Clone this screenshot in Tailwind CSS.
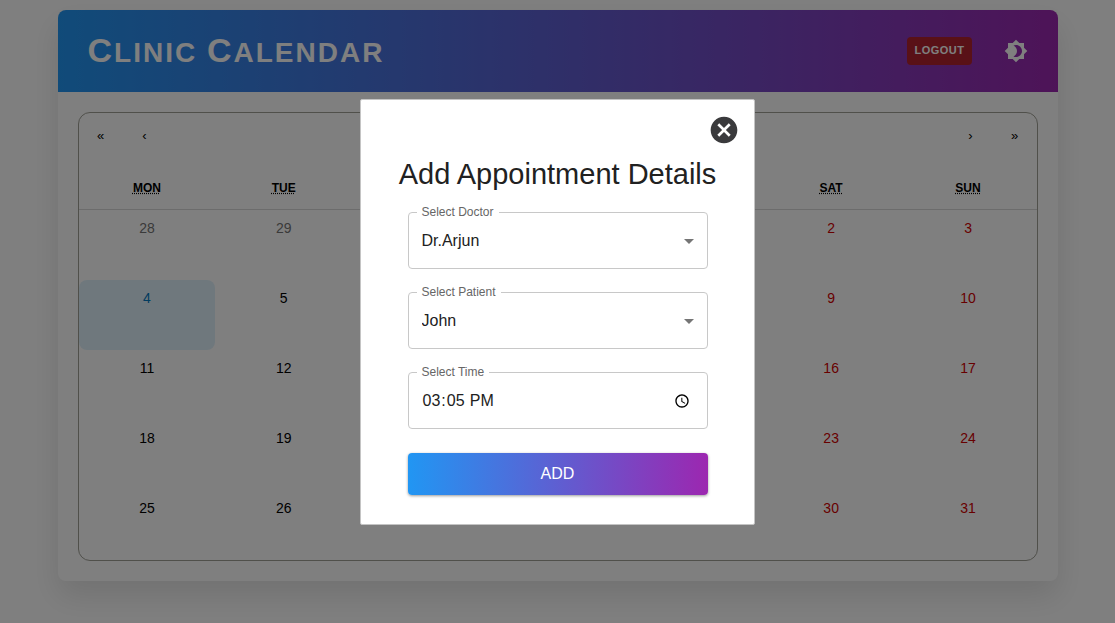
<!DOCTYPE html>
<html lang="en">
<head>
<meta charset="utf-8">
<meta name="viewport" content="width=device-width, initial-scale=1">
<title>Clinic Calendar</title>
<script src="https://cdn.jsdelivr.net/npm/@tailwindcss/browser@4"></script>
</head>
<body class="min-h-screen bg-white font-['Liberation_Sans',Arial,sans-serif] text-black">
<main class="mx-auto mt-[10px] max-w-[1000px] rounded-lg bg-white shadow-[0_15px_30px_rgba(0,0,0,0.11)]">
  <header class="flex items-center justify-between rounded-t-lg bg-linear-[90deg,#2196f3,#9c27b0] px-[30px] py-[20px]">
    <h1 class="pt-[3px] text-[28px] leading-[38px] font-bold tracking-[2px] text-white uppercase"><span class="text-[34px] leading-none">C</span>linic <span class="text-[34px] leading-none">C</span>alendar</h1>
    <div class="flex items-center gap-[32px]">
      <button type="button" class="h-7 rounded bg-[#b2222f] px-[7px] pb-0.5 text-[11px] font-bold tracking-[0.5px] text-white">LOGOUT</button>
      <button type="button" aria-label="Toggle theme" class="text-white">
        <svg class="size-6" viewBox="0 0 24 24" fill="currentColor"><path d="M20 8.690V4h-4.690L12 .690 8.690 4H4v4.690L.690 12 4 15.310V20h4.690L12 23.310 15.310 20H20v-4.690L23.310 12 20 8.690zM12 18c-.890 0-1.740-.2-2.500-.550C11.560 16.500 13 14.420 13 12s-1.440-4.500-3.500-5.450C10.260 6.200 11.110 6 12 6c3.310 0 6 2.690 6 6s-2.690 6-6 6z"/></svg>
      </button>
    </div>
  </header>
  <section class="p-5" aria-label="Calendar">
    <div class="overflow-hidden rounded-xl border border-[#a0a096]">
      <nav class="mb-4 flex h-11 justify-between text-[13px]">
        <div class="flex">
          <button type="button" aria-label="Previous year" class="w-11 pt-0.5">«</button>
          <button type="button" aria-label="Previous month" class="w-11 pt-0.5">‹</button>
        </div>
        <div class="flex">
          <button type="button" aria-label="Next month" class="w-11 pt-0.5">›</button>
          <button type="button" aria-label="Next year" class="w-11 pt-0.5">»</button>
        </div>
      </nav>
      <table class="w-full table-fixed border-collapse text-center text-[14px] leading-4">
        <thead class="text-[12px] uppercase">
          <tr class="h-[36px] border-b border-[#d8d8d8]">
            <th class="pb-1.5"><abbr title="Monday">Mon</abbr></th><th class="pb-1.5"><abbr title="Tuesday">Tue</abbr></th><td></td><td></td><td></td><th class="pb-1.5"><abbr title="Saturday">Sat</abbr></th><th class="pb-1.5"><abbr title="Sunday">Sun</abbr></th>
          </tr>
        </thead>
        <tbody id="days"></tbody>
      </table>
    </div>
  </section>
</main>

<div class="fixed inset-0 flex items-center justify-center bg-black/50">
  <div role="dialog" aria-modal="true" aria-labelledby="dialog-title" class="rounded-[2px] border border-[#c4c4c4] bg-white pt-[14px] pb-[29px]">
    <div class="flex justify-end pr-[14px]">
      <button type="button" aria-label="Close" class="text-[#3a3a3c]">
        <svg class="size-8" viewBox="0 0 24 24" fill="currentColor"><path d="M12 2C6.470 2 2 6.470 2 12s4.470 10 10 10 10-4.470 10-10S17.530 2 12 2zm5 13.590L15.590 17 12 13.410 8.410 17 7 15.590 10.590 12 7 8.410 8.410 7 12 10.590 15.590 7 17 8.410 13.410 12 17 15.590z"/></svg>
      </button>
    </div>
    <form class="px-[38px]">
      <h2 id="dialog-title" class="mt-3 text-[29px] leading-8 text-[#212121]">Add Appointment Details</h2>
      <div class="mx-auto mt-[17px] flex w-[300px] flex-col gap-[18px] text-[#212121]">
        <fieldset class="relative h-[62px] rounded border border-[#c8c8c8] px-2">
          <legend class="h-3 px-[5px] text-[12px] leading-[10px] text-[#666]"><label for="doctor">Select Doctor</label></legend>
          <select id="doctor" class="h-[45px] w-full appearance-none bg-transparent pl-[5px] text-[16px] outline-none"><option>Dr.Arjun</option></select>
          <svg class="pointer-events-none absolute top-[10px] right-[6px] size-6 text-[#757575]" viewBox="0 0 24 24" fill="currentColor"><path d="M7 10l5 5 5-5z"/></svg>
        </fieldset>
        <fieldset class="relative h-[62px] rounded border border-[#c8c8c8] px-2">
          <legend class="h-3 px-[5px] text-[12px] leading-[10px] text-[#666]"><label for="patient">Select Patient</label></legend>
          <select id="patient" class="h-[45px] w-full appearance-none bg-transparent pl-[5px] text-[16px] outline-none"><option>John</option></select>
          <svg class="pointer-events-none absolute top-[10px] right-[6px] size-6 text-[#757575]" viewBox="0 0 24 24" fill="currentColor"><path d="M7 10l5 5 5-5z"/></svg>
        </fieldset>
        <fieldset class="h-[62px] rounded border border-[#c8c8c8] px-2">
          <legend class="h-3 px-[5px] text-[12px] leading-[10px] text-[#666]"><label for="time">Select Time</label></legend>
          <input id="time" type="time" value="15:05" class="h-[45px] w-full bg-transparent px-[5px] text-[16px] outline-none">
        </fieldset>
      </div>
      <button type="button" class="mx-auto mt-6 block h-[42px] w-[300px] rounded bg-linear-[90deg,#2196f3,#9c27b0] text-[16px] text-white shadow-[0_1px_3px_rgba(0,0,0,0.4)]">ADD</button>
    </form>
  </div>
</div>

<script>
  const first = new Date(2025, 6, 28);
  const shownColumns = [0, 1, 5, 6];
  const body = document.getElementById('days');
  for (let week = 0; week < 5; week++) {
    const row = body.insertRow();
    for (let day = 0; day < 7; day++) {
      const cell = row.insertCell();
      if (!shownColumns.includes(day)) continue;
      const date = new Date(first);
      date.setDate(first.getDate() + week * 7 + day);
      cell.className = 'p-0';
      const button = document.createElement('button');
      button.type = 'button';
      button.textContent = date.getDate();
      let tone = 'text-black';
      if (day > 4) tone = 'text-[#d10000]';
      if (date.getMonth() !== 7) tone = 'text-[#757575]';
      if (date.getMonth() === 7 && date.getDate() === 4) tone = 'rounded-lg bg-[#dff1fb] text-[#0078c0]';
      button.className = 'flex h-[70px] w-full justify-center pt-[10px] ' + tone;
      cell.append(button);
    }
  }
</script>
</body>
</html>
